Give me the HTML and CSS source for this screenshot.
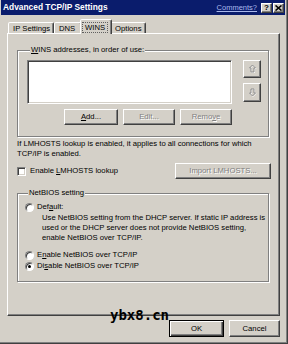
FILE: index.html
```html
<!DOCTYPE html>
<html>
<head>
<meta charset="utf-8">
<link rel="stylesheet" href="styles.css">
</head>
<body>
<div class="win">
  <div class="titlebar">
    <span class="title">Advanced TCP/IP Settings</span>
    <span class="tb-right">
      <span class="comments">Comments?</span>
      <span class="cap-btn q">?</span>
      <span class="cap-btn x">
        <svg width="7" height="6" viewBox="0 0 7 6"><path d="M0.5 0.5 L6.5 5.5 M6.5 0.5 L0.5 5.5" stroke="#000" stroke-width="1.6"/></svg>
      </span>
    </span>
  </div>
  <div class="main">
    <div class="tabs">
      <div class="tab t1">IP Settings</div>
      <div class="tab t2">DNS</div>
      <div class="tab t3 sel"><span class="focus">WINS</span></div>
      <div class="tab t4">Options</div>
    </div>
    <div class="panel">
      <div class="group g1">
        <div class="legend"><u>W</u>INS addresses, in order of use:</div>
        <div class="list-row">
          <div class="listbox"></div>
          <div class="arrows">
            <div class="btn arrow up">
              <svg width="9" height="10" viewBox="0 0 9 10"><path d="M5 1.5 L8 4.5 L6.5 4.5 L6.5 8.5 L3.5 8.5 L3.5 4.5 L2 4.5 Z" fill="none" stroke="#fff" stroke-width="1"/><path d="M4.5 1 L7.5 4 L6 4 L6 8 L3 8 L3 4 L1.5 4 Z" fill="none" stroke="#8a8a8a" stroke-width="1"/></svg>
            </div>
            <div class="btn arrow down">
              <svg width="9" height="10" viewBox="0 0 9 10"><path d="M5 8.5 L8 5.5 L6.5 5.5 L6.5 1.5 L3.5 1.5 L3.5 5.5 L2 5.5 Z" fill="none" stroke="#fff" stroke-width="1"/><path d="M4.5 8 L7.5 5 L6 5 L6 1 L3 1 L3 5 L1.5 5 Z" fill="none" stroke="#8a8a8a" stroke-width="1"/></svg>
            </div>
          </div>
        </div>
        <div class="btn-row">
          <div class="btn b-add"><span><u>A</u>dd...</span></div>
          <div class="btn b-edit dis"><span>Edit...</span></div>
          <div class="btn b-rem dis"><span>Remo<u>v</u>e</span></div>
        </div>
      </div>
      <p class="info">If LMHOSTS lookup is enabled, it applies to all connections for which<br>TCP/IP is enabled.</p>
      <div class="check-row">
        <div class="check"><span class="cb"></span><span>Enable <u>L</u>MHOSTS lookup</span></div>
        <div class="btn b-imp dis"><span>Import LMHOSTS...</span></div>
      </div>
      <div class="group g2">
        <div class="legend">NetBIOS setting</div>
        <div class="radio r-def"><span class="rb"></span><span>Def<u>a</u>ult:</span></div>
        <div class="desc">Use NetBIOS setting from the DHCP server. If static IP address is<br>used or the DHCP server does not provide NetBIOS setting,<br>enable NetBIOS over TCP/IP.</div>
        <div class="radio r-en"><span class="rb"></span><span>E<u>n</u>able NetBIOS over TCP/IP</span></div>
        <div class="radio r-dis"><span class="rb on"></span><span>Di<u>s</u>able NetBIOS over TCP/IP</span></div>
      </div>
    </div>
    <div class="footer">
      <div class="btn def b-ok"><span>OK</span></div>
      <div class="btn b-cancel"><span>Cancel</span></div>
    </div>
  </div>
  <div class="wm">ybx8.cn</div>
</div>
</body>
</html>
```

FILE: styles.css
```css
html, body {
  margin: 0;
  padding: 0;
  background: #d4d0c8;
}
body {
  font-family: "Liberation Sans", Arial, sans-serif;
  font-size: 7.7px;
  color: #000;
}
.win {
  position: relative;
  box-sizing: border-box;
  width: 288px;
  height: 344px;
  padding: 0 3px 2px 1px;
  background: #d4d0c8;
  box-shadow: inset -1px -1px #404040, inset -2px -2px #808080;
  overflow: hidden;
}
.titlebar {
  height: 15px;
  background: #0a1c6c;
  display: flex;
  align-items: center;
  justify-content: space-between;
  padding: 0 1px 0 2px;
}
.title {
  color: #fff;
  font-weight: bold;
  font-size: 8.4px;
  line-height: 15px;
}
.tb-right {
  display: flex;
  align-items: center;
  gap: 1px;
}
.comments {
  color: #a9b8ec;
  text-decoration: underline;
  font-size: 7.5px;
  margin-right: 3px;
}
.cap-btn {
  box-sizing: border-box;
  width: 11px;
  height: 10px;
  background: #d4d0c8;
  border: 1px solid;
  border-color: #fff #404040 #404040 #fff;
  box-shadow: inset -1px -1px #808080;
  display: flex;
  align-items: center;
  justify-content: center;
  font-weight: bold;
  font-size: 8px;
  line-height: 8px;
}
.main {
  margin: 0 5px 0 6px;
}
.tabs {
  display: flex;
  align-items: flex-end;
  height: 14px;
  margin-top: 4px;
  padding-left: 1px;
  position: relative;
  z-index: 2;
}
.tab {
  box-sizing: border-box;
  height: 11px;
  padding: 1px 0 0 4px;
  line-height: 9px;
  border: 1px solid;
  border-bottom: none;
  border-color: #fff #404040 transparent #fff;
  box-shadow: inset -1px 0 #808080;
  border-radius: 2px 2px 0 0;
  white-space: nowrap;
  background: #d4d0c8;
}
.t1 { width: 46px; }
.t2 { width: 28px; }
.t3 { width: 32px; }
.t4 { width: 36px; }
.tab.sel {
  height: 15px;
  margin: 0 -2px -1px;
  padding: 3px 0 0 2px;
  position: relative;
  z-index: 3;
}
.focus {
  display: inline-block;
  padding: 0 2px;
  outline: 1px dotted #606060;
  outline-offset: 0;
  line-height: 9px;
}
.panel {
  box-sizing: border-box;
  height: 283px;
  border: 1px solid;
  border-color: #fff #404040 #404040 #fff;
  box-shadow: inset -1px -1px #808080;
  padding: 16px 10px 0 9px;
  position: relative;
  z-index: 1;
}
.group {
  border: 1px solid #808080;
  box-shadow: inset 1px 1px #fff, 1px 1px #fff;
}
.legend {
  width: fit-content;
  margin: -6px 0 0 3px;
  padding: 0 1px;
  line-height: 10px;
  background: #d4d0c8;
}
.g1 {
  height: 87px;
  box-sizing: border-box;
  padding: 0 0 0 9px;
}
.list-row {
  display: flex;
  margin-top: 5px;
  gap: 11px;
}
.listbox {
  box-sizing: border-box;
  width: 205px;
  height: 44px;
  background: #fff;
  border: 1px solid;
  border-color: #808080 #fff #fff #808080;
  box-shadow: inset 1px 1px #404040, inset -1px -1px #d4d0c8;
}
.arrows {
  display: flex;
  flex-direction: column;
  gap: 5px;
}
.btn {
  box-sizing: border-box;
  height: 16px;
  background: #d4d0c8;
  border: 1px solid;
  border-color: #fff #404040 #404040 #fff;
  box-shadow: inset -1px -1px #808080;
  display: flex;
  align-items: center;
  justify-content: center;
  line-height: 10px;
  white-space: nowrap;
}
.btn.arrow {
  width: 18px;
  height: 18px;
}
.btn.arrow.down { height: 19px; }
.dis {
  color: #808080;
  text-shadow: 1px 1px #fff;
}
.btn-row {
  display: flex;
  justify-content: flex-end;
  gap: 5px;
  width: 205px;
  margin-top: 5px;
}
.b-add { width: 54px; }
.b-edit { width: 52px; }
.b-rem { width: 52px; }
.info {
  margin: 2px 0 0 0;
  line-height: 10px;
}
.check-row {
  display: flex;
  align-items: center;
  justify-content: space-between;
  margin-top: 4px;
  margin-right: -2px;
}
.check {
  display: flex;
  align-items: center;
  gap: 4px;
  line-height: 10px;
}
.cb {
  box-sizing: border-box;
  width: 9px;
  height: 9px;
  background: #fff;
  border: 1px solid;
  border-color: #808080 #fff #fff #808080;
  box-shadow: inset 1px 1px #404040, inset -1px -1px #d4d0c8;
}
.b-imp { width: 96px; }
.g2 {
  margin-top: 14px;
  height: 89px;
  box-sizing: border-box;
  padding: 0 0 0 7px;
}
.radio {
  display: flex;
  align-items: center;
  gap: 3px;
  line-height: 10px;
}
.r-def { margin-top: 4px; }
.r-en { margin-top: 7px; }
.r-dis { margin-top: 1px; }
.rb {
  box-sizing: border-box;
  width: 9px;
  height: 9px;
  border-radius: 50%;
  background: #fff;
  border: 1px solid;
  border-color: #808080 #fff #fff #808080;
  box-shadow: inset 1px 1px #404040;
  position: relative;
}
.rb.on::after {
  content: "";
  position: absolute;
  left: 2px;
  top: 2px;
  width: 3px;
  height: 3px;
  border-radius: 50%;
  background: #000;
}
.desc {
  margin: 1px 0 0 17px;
  line-height: 10px;
}
.footer {
  display: flex;
  justify-content: flex-end;
  gap: 5px;
  margin-top: 4px;
}
.b-ok {
  width: 55px;
  height: 17px;
}
.b-cancel {
  width: 51px;
  height: 17px;
}
.btn.def {
  border-color: #000;
  box-shadow: inset 1px 1px #fff, inset -1px -1px #404040, inset -2px -2px #808080;
}
.wm {
  position: absolute;
  left: 110px;
  top: 307px;
  font-family: "DejaVu Sans Mono", monospace;
  font-weight: bold;
  font-size: 14px;
  line-height: 16px;
  color: #000;
  z-index: 5;
}
```
